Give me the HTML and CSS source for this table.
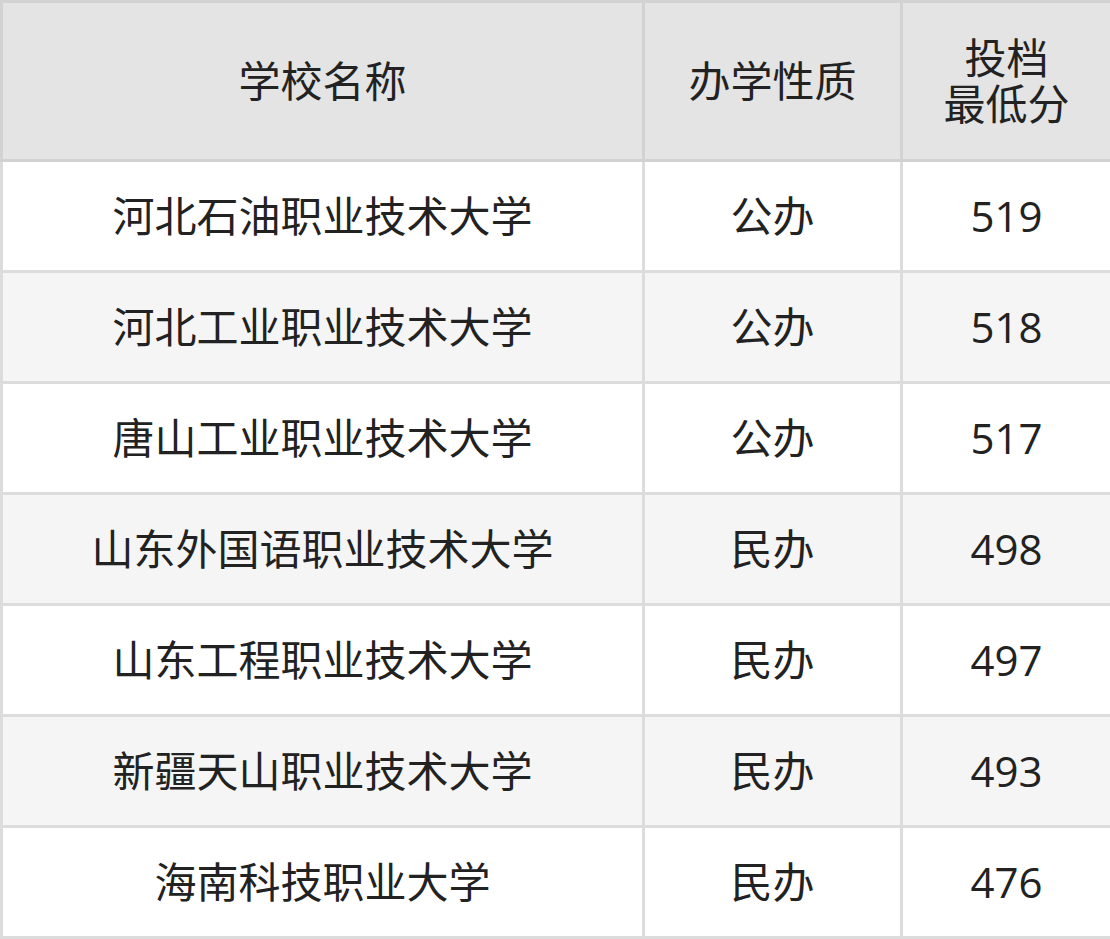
FILE: index.html
```html
<!DOCTYPE html>
<html lang="zh-CN">
<head>
<meta charset="utf-8">
<link rel="stylesheet" href="styles.css">
</head>
<body>
<table class="score-table">
  <colgroup>
    <col class="c-name">
    <col class="c-type">
    <col class="c-score">
  </colgroup>
  <thead>
    <tr><th>学校名称</th><th>办学性质</th><th>投档<br>最低分</th></tr>
  </thead>
  <tbody>
    <tr><td>河北石油职业技术大学</td><td>公办</td><td>519</td></tr>
    <tr><td>河北工业职业技术大学</td><td>公办</td><td>518</td></tr>
    <tr><td>唐山工业职业技术大学</td><td>公办</td><td>517</td></tr>
    <tr><td>山东外国语职业技术大学</td><td>民办</td><td>498</td></tr>
    <tr><td>山东工程职业技术大学</td><td>民办</td><td>497</td></tr>
    <tr><td>新疆天山职业技术大学</td><td>民办</td><td>493</td></tr>
    <tr><td>海南科技职业大学</td><td>民办</td><td>476</td></tr>
  </tbody>
</table>
</body>
</html>
```
FILE: styles.css
```css
html, body {
  margin: 0;
  padding: 0;
  background: #ffffff;
}
.score-table {
  width: 1110px;
  border-collapse: collapse;
  table-layout: fixed;
  font-family: "Open Sans", "Noto Sans CJK SC", sans-serif;
  font-size: 42px;
  color: #222222;
  border: 3px solid #d4d4d4;
}
.c-name { width: 642px; }
.c-type { width: 258px; }
.c-score { width: 210px; }
.score-table th,
.score-table td {
  border: 3px solid #dcdcdc;
  text-align: center;
  vertical-align: middle;
  padding: 0 4px;
  font-weight: normal;
}
.score-table th {
  background: #e4e4e4;
  border-color: #d2d2d2;
  height: 156px;
  line-height: 46px;
}
.score-table td {
  height: 108px;
  line-height: 50px;
}
.score-table tbody tr:nth-child(even) td {
  background: #f5f5f5;
}
```
